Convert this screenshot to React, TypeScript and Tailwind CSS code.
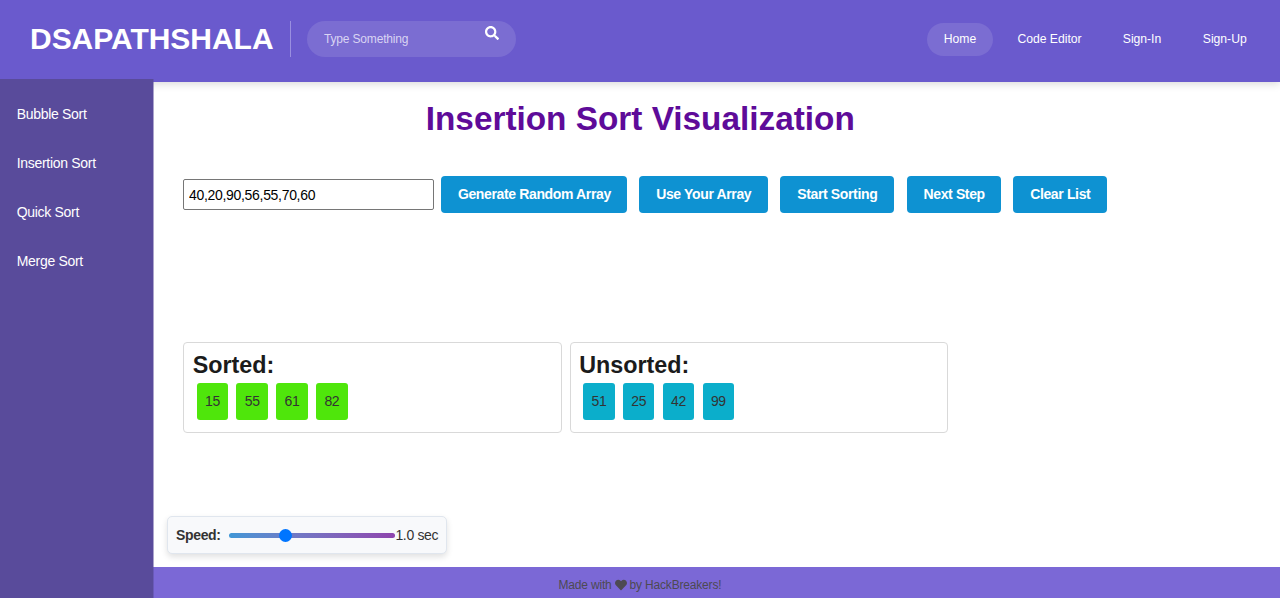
import { FaHeart, FaSearch } from "react-icons/fa";

const algorithms = ["Bubble Sort", "Insertion Sort", "Quick Sort", "Merge Sort"];

function Header() {
  return (
    <header className="relative flex h-[82px] shrink-0 items-start bg-[#6a5acd] pt-[20.5px] text-white shadow-[0_2px_8px_rgba(0,0,0,0.15)]">
      <div className="ml-[30px] flex h-[36px] w-[261px] items-center border-r border-[#9a8fe0] text-[30px] font-bold tracking-[-0.03px] whitespace-nowrap">
        DSAPATHSHALA
      </div>
      <div className="ml-[16px] flex h-[36px] w-[208.5px] items-center rounded-full bg-[#7b6dd2] pr-[16.5px] pl-[17px]">
        <input
          placeholder="Type Something"
          className="w-[150px] bg-transparent text-[12px] tracking-[-0.17px] outline-none placeholder:text-[#d9d4f3]"
        />
        <FaSearch className="mb-[11px] ml-auto size-[14px] shrink-0" />
      </div>
      <nav className="mt-[2px] mr-[16.5px] ml-auto flex h-[33.5px] items-stretch gap-[8px] text-[12.2px] tracking-[-0.03px]">
        <a className="flex w-[66px] items-center justify-center rounded-full bg-[#7b6dd2]">Home</a>
        <a className="flex w-[97px] items-center justify-center">Code Editor</a>
        <a className="flex w-[72px] items-center justify-center">Sign-In</a>
        <a className="flex w-[77.5px] items-center justify-center">Sign-Up</a>
      </nav>
    </header>
  );
}

function Sidebar() {
  return (
    <aside className="relative z-10 -mt-[3px] flex w-[154px] shrink-0 flex-col border-r border-[#594b9b]/50 bg-[#594b9b] bg-clip-padding pt-[11px] text-[14px] tracking-[-0.3px] text-white">
      {algorithms.map((name) => (
        <a key={name} className="flex h-[49.15px] items-center pl-[16.7px]">
          {name}
        </a>
      ))}
    </aside>
  );
}

function ActionButton({ label, className }: { label: string; className: string }) {
  return (
    <button
      className={`flex h-[36.5px] items-center justify-center rounded-[4px] bg-[#0e92d2] text-[14px] font-bold tracking-[-0.36px] whitespace-nowrap text-white ${className}`}
    >
      {label}
    </button>
  );
}

function ListPanel({ title, values, tile }: { title: string; values: number[]; tile: string }) {
  return (
    <section className="h-[91px] w-[378.5px] rounded-[4px] border border-[#d9d9d9] px-[8.5px] pt-[8px]">
      <h2 className="text-[23.33px] leading-[28px] font-bold text-[#1b1b1b]">{title}</h2>
      <div className="mt-[4px] ml-[4px] flex gap-[8.3px]">
        {values.map((value) => (
          <div
            key={value}
            className={`flex h-[37px] w-[31.5px] items-center justify-center rounded-[3px] text-[14px] tracking-[-0.37px] text-[#333] ${tile}`}
          >
            {value}
          </div>
        ))}
      </div>
    </section>
  );
}

function SpeedControl() {
  return (
    <div className="mt-[83px] ml-[13px] flex h-[38px] w-[280.4px] items-center rounded-[5px] border border-[#e0e6ee] bg-[#f8f9fb] pl-[8px] text-[14px] tracking-[-0.34px] text-[#333] shadow-[0_3px_6px_rgba(0,0,0,0.12)]">
      <span className="w-[52.6px] font-bold">Speed:</span>
      <div className="flex h-[5px] w-[166.8px] items-center rounded-full bg-linear-to-r from-[#3f97d6] to-[#8e44ad] pl-[50.5px]">
        <div className="size-[13px] rounded-full bg-[#0075ff]" />
      </div>
      <span className="whitespace-nowrap">1.0 sec</span>
    </div>
  );
}

export default function App() {
  return (
    <div className="flex h-[598px] w-[1280px] flex-col overflow-hidden bg-white font-['Liberation_Sans',Arial,sans-serif]">
      <Header />
      <div className="flex min-h-0 flex-1">
        <Sidebar />
        <div className="flex flex-1 flex-col">
          <main className="flex-1">
            <h1 className="mr-[153.5px] pt-[17px] text-center text-[33.33px] leading-[40px] font-bold text-[#5e0b99]">
              Insertion Sort Visualization
            </h1>
            <div className="mt-[37px] ml-[29px] flex h-[37px] items-center">
              <input
                defaultValue="40,20,90,56,55,70,60"
                className="h-[31px] w-[251px] rounded-[2px] border border-[#767676] px-[5px] text-[14px] tracking-[-0.31px] text-black outline-none"
              />
              <ActionButton label="Generate Random Array" className="ml-[7.4px] w-[186px]" />
              <ActionButton label="Use Your Array" className="ml-[12.1px] w-[128.5px]" />
              <ActionButton label="Start Sorting" className="ml-[12.3px] w-[114px]" />
              <ActionButton label="Next Step" className="ml-[12.6px] w-[94.5px]" />
              <ActionButton label="Clear List" className="ml-[11.9px] w-[94px]" />
            </div>
            <div className="mt-[129px] ml-[29.2px] flex gap-[8px]">
              <ListPanel title="Sorted:" values={[15, 55, 61, 82]} tile="bg-[#4fe60b]" />
              <ListPanel title="Unsorted:" values={[51, 25, 42, 99]} tile="bg-[#0baecb]" />
            </div>
            <SpeedControl />
          </main>
          <footer className="-ml-px flex h-[31px] items-center bg-[#7b68d6] pt-[4px] pl-[405.5px] text-[12px] tracking-[-0.18px] text-[#4d4a52]">
            Made with
            <FaHeart className="mx-[3px] size-[12px]" />
            by HackBreakers!
          </footer>
        </div>
      </div>
    </div>
  );
}
